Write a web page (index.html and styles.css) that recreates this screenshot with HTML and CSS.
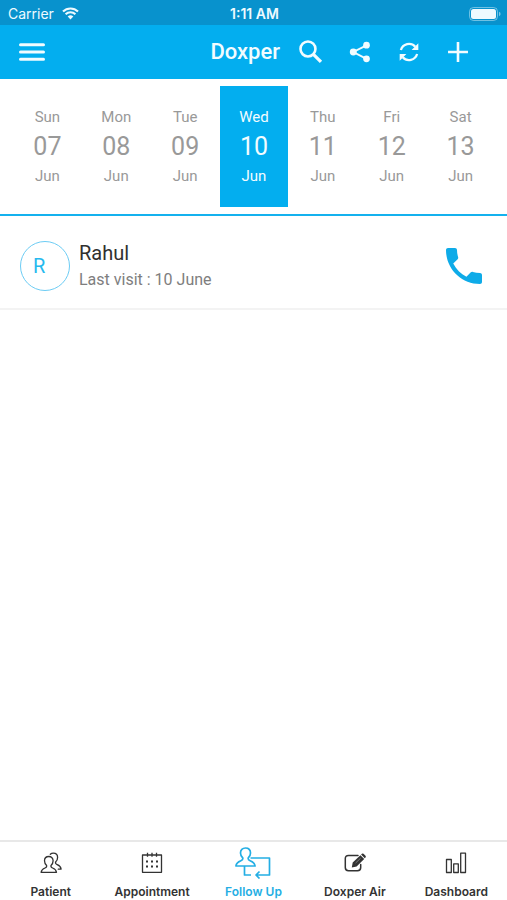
FILE: index.html
```html
<!DOCTYPE html>
<html lang="en">
<head>
<meta charset="utf-8">
<meta name="viewport" content="width=device-width, initial-scale=1">
<title>Doxper</title>
<link rel="stylesheet" href="styles.css">
</head>
<body>
<div class="status">
  <div class="status-left">
    <span>Carrier</span>
    <svg class="wifi" viewBox="0 0 17 13" aria-hidden="true">
      <path d="M1 4.600a10.600 10.600 0 0 1 15 0M3.600 7.300a7 7 0 0 1 9.800 0" fill="none" stroke="currentColor" stroke-width="2.100"/>
      <path d="M8.500 12.400 5.700 9.600a4 4 0 0 1 5.600 0z" fill="currentColor"/>
    </svg>
  </div>
  <span class="clock">1:11 AM</span>
  <div class="status-right">
    <svg class="battery" viewBox="0 0 32 14" aria-hidden="true">
      <rect x=".5" y=".5" width="28" height="13" rx="4" fill="none" stroke="currentColor" stroke-opacity=".45"/>
      <rect x="2" y="2" width="25" height="10" rx="2.500" fill="currentColor"/>
      <path d="M30 4.800q1.600.6 1.600 2.200T30 9.200z" fill="currentColor" fill-opacity=".5"/>
    </svg>
  </div>
</div>
<header class="bar">
  <button class="menu" aria-label="Menu">
    <svg viewBox="0 0 26 18"><path d="M1.500 1.700h23M1.500 9h23M1.500 16.300h23" fill="none" stroke="currentColor" stroke-width="3" stroke-linecap="round"/></svg>
  </button>
  <h1>Doxper</h1>
  <div class="actions">
    <button aria-label="Search">
      <svg viewBox="0 0 24 24"><circle cx="9.200" cy="9.200" r="6.900" fill="none" stroke="currentColor" stroke-width="2.400"/><path d="m14 14 7.200 7.200" fill="none" stroke="currentColor" stroke-width="3"/></svg>
    </button>
    <button aria-label="Share">
      <svg viewBox="0 0 24 24"><path d="M18 5.800 5.800 12 18 18.300" fill="none" stroke="currentColor" stroke-width="1.800"/><g fill="currentColor"><circle cx="18" cy="5.700" r="3.100"/><circle cx="5.800" cy="12" r="3.200"/><circle cx="18" cy="18.300" r="3.100"/></g></svg>
    </button>
    <button aria-label="Refresh">
      <svg viewBox="0 0 24 24"><path d="M4.500 10.200A7.800 7.800 0 0 1 17.800 7.200M19.500 13.800A7.800 7.800 0 0 1 6.200 16.800" fill="none" stroke="currentColor" stroke-width="2.100"/><path d="M20.600 4v6.200h-6.200zM3.400 20v-6.200h6.200z" fill="currentColor"/></svg>
    </button>
    <button aria-label="Add">
      <svg viewBox="0 0 24 24"><path d="M12 2.800v18.400M2.800 12h18.400" fill="none" stroke="currentColor" stroke-width="2.400"/></svg>
    </button>
  </div>
</header>
<nav class="days" aria-label="Days">
  <button class="day"><span>Sun</span><b>07</b><span>Jun</span></button>
  <button class="day"><span>Mon</span><b>08</b><span>Jun</span></button>
  <button class="day"><span>Tue</span><b>09</b><span>Jun</span></button>
  <button class="day selected" aria-current="date"><span>Wed</span><b>10</b><span>Jun</span></button>
  <button class="day"><span>Thu</span><b>11</b><span>Jun</span></button>
  <button class="day"><span>Fri</span><b>12</b><span>Jun</span></button>
  <button class="day"><span>Sat</span><b>13</b><span>Jun</span></button>
</nav>
<main>
  <article class="visit">
    <div class="avatar">R</div>
    <div class="who">
      <h2>Rahul</h2>
      <p>Last visit : 10 June</p>
    </div>
    <button class="call" aria-label="Call Rahul">
      <svg viewBox="3 3 18 18"><path fill="currentColor" d="M6.620 10.790c1.440 2.830 3.760 5.140 6.590 6.590l2.200-2.200c.27-.27.67-.36 1.020-.24 1.120.37 2.330.57 3.570.57.55 0 1 .45 1 1V20c0 .55-.45 1-1 1-9.390 0-17-7.610-17-17 0-.55.45-1 1-1h3.500c.55 0 1 .45 1 1 0 1.250.2 2.450.57 3.570.11.35.03.74-.25 1.020l-2.200 2.200z"/></svg>
    </button>
  </article>
</main>
<nav class="tabs" aria-label="Sections">
  <a href="#patient">
    <svg class="small" viewBox="0 0 22 22"><g fill="none" stroke="currentColor" stroke-width="1.300" stroke-linejoin="round" stroke-linecap="round"><path d="M8.800 4.500c-2.700 0-4.300 1.700-4.300 4.300 0 2 .9 3.600 2.100 4.700.3 1.200-.3 2-1.600 2.500-2.200.8-3.500 1.400-3.900 4.300h15.400c-.4-2.900-1.700-3.500-3.900-4.300-1.300-.5-1.900-1.300-1.600-2.500 1.200-1.100 2.100-2.700 2.100-4.700 0-2.600-1.600-4.300-4.300-4.300z"/><path d="M10.300 2.300c.8-.8 1.800-1.200 3-1.200 2.700 0 4.300 1.700 4.300 4.300 0 2-.8 3.500-2 4.600-.3 1.300.3 2.200 1.600 2.700 2.200.8 3.500 1.700 3.900 4.500h-2.800"/></g></svg>
    <span>Patient</span>
  </a>
  <a href="#appointment">
    <svg class="small" viewBox="0 0 22 22"><path d="M1.500 3h19v17.300h-19zM6.500.8v4M11 .8v4M15.500.8v4" fill="none" stroke="currentColor" stroke-width="1.300" stroke-linejoin="round"/><path d="M5 8.500h2v2H5zm5 0h2v2h-2zm5 0h2v2h-2zM5 13.500h2v2H5zm5 0h2v2h-2zm5 0h2v2h-2z" fill="currentColor"/></svg>
    <span>Appointment</span>
  </a>
  <a href="#follow-up" class="active" aria-current="page">
    <svg class="large" viewBox="0 0 36 32"><g fill="none" stroke="currentColor" stroke-width="1.700" stroke-linejoin="round"><path d="M10.500 1C7.400 1 5.500 3 5.500 6c0 2.200 1 3.900 2.300 5 .3 1.400-.4 2.200-1.900 2.800C3.300 14.800 1.300 15.600.9 19h19.200c-.4-3.400-2.400-4.200-5-5.200-1.500-.6-2.200-1.400-1.900-2.800 1.300-1.100 2.300-2.800 2.300-5 0-3-1.900-5-5-5z"/><path d="M15.500 11h19v17H21M24.500 24.500 21 28l3.500 3.500M9.500 19v9h6.500"/></g></svg>
    <span>Follow Up</span>
  </a>
  <a href="#air">
    <svg class="small" viewBox="0 0 22 22"><path d="M14 3.400H4.500Q1.300 3.400 1.300 6.600v9q0 3.200 3.200 3.200h9q3.200 0 3.200-3.200v-3" fill="none" stroke="currentColor" stroke-width="1.500" stroke-linecap="round"/><path d="m7.800 15.400.9-4.900 7.700-7.300 3.800 3.800-7.600 7.400zM17.100 2.500l.8-.7q.8-.7 1.600 0l2 2q.7.8 0 1.600l-.7.800z" fill="currentColor"/><path d="m11.600 11 5-4.800" fill="none" stroke="#fff" stroke-opacity=".6" stroke-width=".6"/></svg>
    <span>Doxper Air</span>
  </a>
  <a href="#dashboard">
    <svg class="small" viewBox="0 0 22 22"><path d="M1.500 7.500h4.800v13H1.500zM8.700 11.800h4.600v8.700H8.700zM15.700 1.200h4.800v19.300h-4.800z" fill="none" stroke="currentColor" stroke-width="1.300" stroke-linejoin="round"/></svg>
    <span>Dashboard</span>
  </a>
</nav>
</body>
</html>
```
FILE: styles.css
```css
* {
  box-sizing: border-box;
}

body {
  margin: 0;
  min-height: 100vh;
  display: flex;
  flex-direction: column;
  background: #fff;
  color: #303030;
  font-family: Roboto, "Liberation Sans", sans-serif;
}

h1, h2, p {
  margin: 0;
}

button {
  border: 0;
  padding: 0;
  background: none;
  color: inherit;
  font: inherit;
}

svg {
  display: block;
}

.status {
  display: grid;
  grid-template-columns: 1fr auto 1fr;
  align-items: center;
  height: 25px;
  padding: 2px 6px 0 8px;
  background: #0892cd;
  color: #eefaff;
  font: 14px/20px Inter, sans-serif;
}

.status-left {
  display: flex;
  align-items: center;
  gap: 8px;
}

.wifi {
  width: 17px;
  height: 13px;
}

.clock {
  font-weight: 600;
}

.status-right {
  display: flex;
  justify-content: flex-end;
}

.battery {
  width: 32px;
  height: 14px;
}

.bar {
  display: flex;
  align-items: center;
  height: 54px;
  padding: 0 36px 0 19px;
  background: #03aeef;
  color: #f2fcff;
}

.menu {
  width: 26px;
}

.bar h1 {
  margin-left: auto;
  font-size: 22px;
  line-height: 28px;
  font-weight: 500;
}

.actions {
  display: flex;
  gap: 23px;
  margin-left: 18px;
}

.actions button {
  width: 26px;
  height: 26px;
}

.actions svg {
  width: 26px;
  height: 26px;
}

.days {
  display: grid;
  grid-template-columns: repeat(7, 1fr);
  padding: 7px 12px 7px 13px;
  border-bottom: 2px solid #14b1ee;
}

.day {
  display: flex;
  flex-direction: column;
  align-items: center;
  padding: 20px 0;
  color: #999;
  font-size: 15px;
  line-height: 22px;
}

.day b {
  font-size: 25px;
  line-height: 37px;
  font-weight: 400;
}

.selected {
  background: #03aeef;
  color: #f2fcff;
}

main {
  flex: 1;
}

.visit {
  display: flex;
  align-items: center;
  gap: 9px;
  padding: 23px 25px 15px 20px;
  border-bottom: 2px solid #f3f3f3;
}

.avatar {
  width: 50px;
  height: 50px;
  padding-left: 12px;
  border: 1px solid #6cccf4;
  border-radius: 50%;
  color: #27b9ee;
  font-size: 20px;
  line-height: 49px;
}

.who {
  flex: 1;
}

.who h2 {
  font-size: 20px;
  line-height: 28px;
  font-weight: 400;
}

.who p {
  color: #7e7e7e;
  font-size: 16px;
  line-height: 26px;
}

.call {
  width: 36px;
  color: #0eabe8;
}

.tabs {
  display: grid;
  grid-template-columns: repeat(5, 1fr);
  height: 60px;
  border-top: 2px solid #e8e8e8;
}

.tabs a {
  display: grid;
  grid-template-rows: 42px 16px;
  place-items: center;
  color: #333;
  font: 600 12px/16px Inter, sans-serif;
  text-decoration: none;
}

.tabs .active {
  color: #24aee4;
}

.small {
  width: 22px;
  height: 22px;
}

.large {
  width: 36px;
  height: 32px;
}
```
